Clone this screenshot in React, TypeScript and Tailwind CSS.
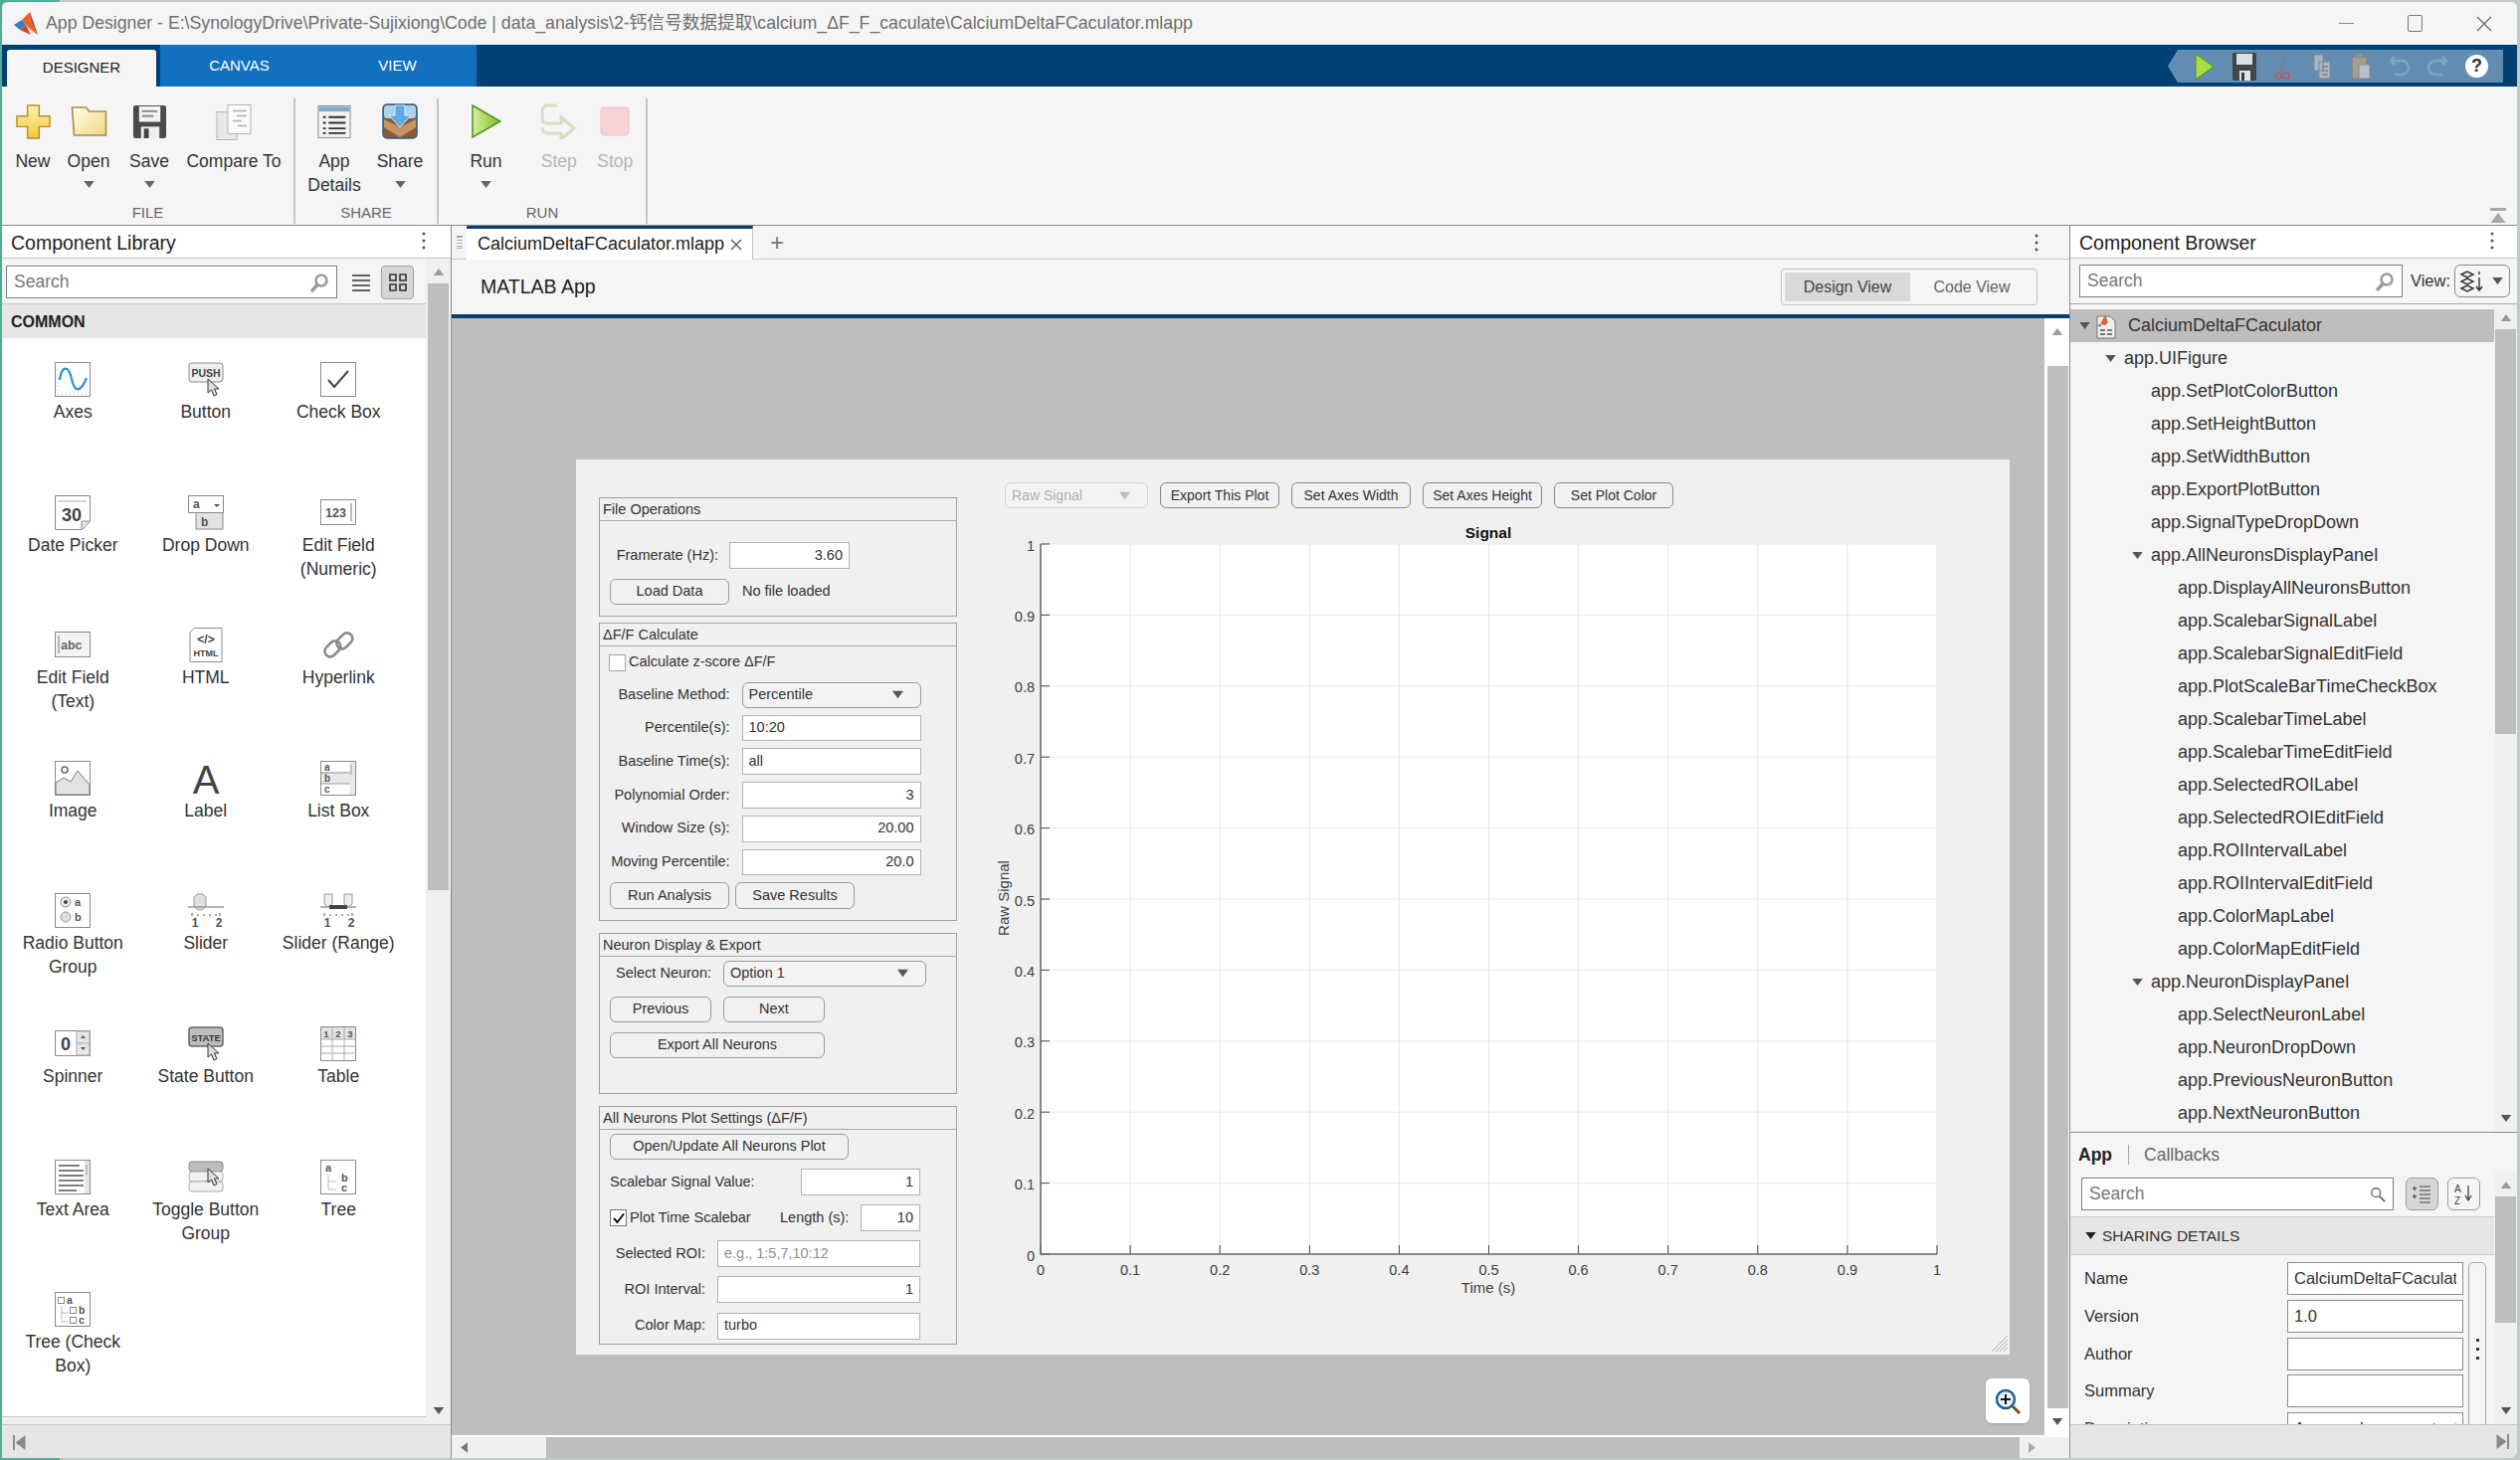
import React from 'react';

const Tri = ({ dir = 'down', className = '' }: { dir?: 'down' | 'up' | 'left' | 'right'; className?: string }) => {
  const pts = { down: '0,0 12,0 6,8', up: '0,8 12,8 6,0', left: '8,0 8,12 0,6', right: '0,0 0,12 8,6' }[dir];
  const box = dir === 'down' || dir === 'up' ? '0 0 12 8' : '0 0 8 12';
  return (
    <svg viewBox={box} className={className}>
      <polygon points={pts} fill="currentColor" />
    </svg>
  );
};

const MoreDots = ({ className = '' }: { className?: string }) => (
  <svg viewBox="0 0 4 18" className={`w-[4px] h-[18px] ${className}`}>
    <circle cx="2" cy="2" r="1.5" fill="#555" />
    <circle cx="2" cy="9" r="1.5" fill="#555" />
    <circle cx="2" cy="16" r="1.5" fill="#555" />
  </svg>
);

const Magnifier = ({ className = '' }: { className?: string }) => (
  <svg viewBox="0 0 20 20" className={className}>
    <circle cx="12" cy="8" r="5.5" fill="none" stroke="#9a9a9a" strokeWidth="2.6" />
    <line x1="8" y1="12.5" x2="3" y2="18" stroke="#9a9a9a" strokeWidth="3.4" strokeLinecap="round" />
  </svg>
);

// ---- ribbon icons ----
const ribbonIcons: Record<string, React.ReactNode> = {
  New: (
    <svg viewBox="0 0 36 36" className="w-[35px] h-[35px]">
      <defs>
        <linearGradient id="gold" x1="0" y1="0" x2="0" y2="1">
          <stop offset="0" stopColor="#fff3b0" />
          <stop offset="1" stopColor="#f3c53c" />
        </linearGradient>
      </defs>
      <polygon points="12,1 24,1 24,12 35,12 35,23 24,23 24,35 12,35 12,23 1,23 1,12 12,12" fill="url(#gold)" stroke="#b8901f" strokeWidth="1.5" />
    </svg>
  ),
  Open: (
    <svg viewBox="0 0 36 36" className="w-[37px] h-[36px]">
      <defs>
        <linearGradient id="fold" x1="0" y1="0" x2="1" y2="1">
          <stop offset="0" stopColor="#fffde8" />
          <stop offset="1" stopColor="#f0d77e" />
        </linearGradient>
      </defs>
      <path d="M1 4h14l3 4h17v24H3z" fill="url(#fold)" stroke="#a58d50" strokeWidth="1.6" />
    </svg>
  ),
  Save: (
    <svg viewBox="0 0 36 36" className="w-[35px] h-[35px]">
      <rect x="1" y="1" width="34" height="34" rx="2" fill="#4b4b4b" />
      <rect x="7" y="2" width="22" height="16" fill="#f4f4f4" />
      <rect x="10" y="6" width="16" height="2" fill="#888" />
      <rect x="10" y="11" width="12" height="2" fill="#888" />
      <rect x="9" y="23" width="19" height="12" fill="#eee" />
      <rect x="12" y="25" width="5" height="10" fill="#444" />
    </svg>
  ),
  'Compare To': (
    <svg viewBox="0 0 36 36" className="w-[36px] h-[37px]">
      <rect x="1" y="8" width="20" height="28" fill="#e8e8e8" stroke="#b5b5b5" />
      <rect x="12" y="1" width="23" height="29" fill="#fafafa" stroke="#b5b5b5" />
      <path d="M17 7h14M21 12h10M17 17h9M22 22h9" stroke="#b0b0b0" strokeWidth="1.5" />
    </svg>
  ),
  'App Details': (
    <svg viewBox="0 0 36 36" className="w-[34px] h-[35px]">
      <rect x="1" y="1" width="34" height="34" fill="#f1f1f1" stroke="#8a8a8a" />
      <rect x="2" y="2" width="32" height="5" fill="#7fa8cf" />
      <path d="M12 13h18M12 19h18M12 25h18M12 30h18M6 13h3M6 19h3M6 25h3M6 30h3" stroke="#303030" strokeWidth="2" />
    </svg>
  ),
  Share: (
    <svg viewBox="0 0 36 36" className="w-[36px] h-[36px]">
      <rect x="1" y="1" width="34" height="34" rx="4" fill="#8a5a34" stroke="#2e5f8e" strokeWidth="1.5" />
      <rect x="2" y="2" width="32" height="13" rx="3" fill="#a9d2ef" />
      <path d="M2 16l16 8 16-8v8l-16 10-16-10z" fill="#c69667" />
      <path d="M13 2h10v10h6L18 24 7 12h6z" fill="#5ea9e0" stroke="#dff0fb" />
    </svg>
  ),
  Run: (
    <svg viewBox="0 0 30 34" className="w-[30px] h-[34px]">
      <defs>
        <linearGradient id="grn" x1="0" y1="0" x2="1" y2="0">
          <stop offset="0" stopColor="#d7ee9d" />
          <stop offset="1" stopColor="#7dbf2a" />
        </linearGradient>
      </defs>
      <polygon points="1,1 29,17 1,33" fill="url(#grn)" stroke="#4f9220" strokeWidth="1.5" />
    </svg>
  ),
  Step: (
    <svg viewBox="0 0 36 36" className="w-[36px] h-[36px] opacity-50">
      <path d="M16 2H6a5 5 0 0 0-5 5v8a5 5 0 0 0 5 5h14v-6l13 11-13 11v-6H7C1 30 1 24 1 24" fill="none" stroke="#a9cf8c" strokeWidth="3" />
    </svg>
  ),
  Stop: (
    <svg viewBox="0 0 30 30" className="w-[30px] h-[30px]">
      <rect x="1" y="1" width="28" height="28" rx="3" fill="#f6d3d6" stroke="#eec2c6" />
    </svg>
  ),
};

const RibbonItem = ({ label, className, caret, muted }: { label: string; className: string; caret?: boolean; muted?: boolean }) => (
  <div className={`flex flex-col items-center ${className}`}>
    <div className="h-[40px] flex items-center justify-center">{ribbonIcons[label]}</div>
    <div className={`mt-[8px] text-[17.5px] leading-[24px] text-center ${muted ? 'text-[#b4b4b4]' : 'text-[#333]'}`}>
      {label === 'App Details' ? (
        <>
          App
          <br />
          Details
        </>
      ) : (
        label
      )}
    </div>
    {caret && <Tri className="w-[11px] h-[7px] mt-[8px] text-[#666]" />}
  </div>
);

// ---- library icons ----
const frame = 'fill-white stroke-[#8a8a8a]';
const libIcons: Record<string, React.ReactNode> = {
  Axes: (
    <>
      <rect x="0.5" y="0.5" width="35" height="34" className={frame} />
      <path d="M5 18C7 3 14 3 17 17S26 31 32 16" fill="none" stroke="#2f8fd6" strokeWidth="2.2" />
      <path d="M3 4v28h30" fill="none" stroke="#bbb" strokeDasharray="1 3" />
    </>
  ),
  Button: (
    <>
      <rect x="1" y="1" width="34" height="19" rx="3" fill="#efefef" stroke="#8a8a8a" />
      <text x="18" y="15" fontSize="10.5" fontWeight="700" textAnchor="middle" fill="#444">PUSH</text>
      <path d="M20 17v14l3.500-3 2.500 6 3-1.500-2.500-5.500h4.500z" fill="#ddd" stroke="#333" />
    </>
  ),
  'Check Box': (
    <>
      <rect x="0.5" y="0.5" width="35" height="34" className={frame} />
      <path d="M8 18l6 7L28 9" fill="none" stroke="#444" strokeWidth="2" />
    </>
  ),
  'Date Picker': (
    <>
      <path d="M.5.5h35v26l-8 8H.5z" className={frame} />
      <path d="M4 6h28" stroke="#aaa" />
      <text x="17" y="26" fontSize="18" fontWeight="700" textAnchor="middle" fill="#444">30</text>
      <path d="M27 34v-8h8" fill="#e6e6e6" stroke="#8a8a8a" />
    </>
  ),
  'Drop Down': (
    <>
      <rect x="8" y="17" width="27" height="17" fill="#e2e2e2" stroke="#8a8a8a" />
      <rect x="0.5" y="0.5" width="35" height="17" className={frame} />
      <text x="5" y="13" fontSize="12" fontWeight="700" fill="#555">a</text>
      <polygon points="26,9 32,9 29,12" fill="#555" />
      <text x="13" y="31" fontSize="12" fontWeight="700" fill="#555">b</text>
    </>
  ),
  'Edit Field (Numeric)': (
    <>
      <rect x="0.5" y="4.500" width="35" height="25" className={frame} />
      <text x="5" y="22" fontSize="12.5" fontWeight="700" fill="#555">123</text>
      <path d="M31 8v18" stroke="#777" />
    </>
  ),
  'Edit Field (Text)': (
    <>
      <rect x="0.5" y="4.500" width="35" height="25" fill="#f4f4f4" stroke="#8a8a8a" />
      <path d="M4 8v18" stroke="#777" />
      <text x="6" y="22" fontSize="12.5" fontWeight="700" fill="#666">abc</text>
    </>
  ),
  HTML: (
    <>
      <path d="M6 .5h28v34H2V5z" className={frame} />
      <text x="18" y="16" fontSize="12" fontWeight="700" textAnchor="middle" fill="#444">&lt;/&gt;</text>
      <text x="18" y="29" fontSize="9" fontWeight="700" textAnchor="middle" fill="#444">HTML</text>
    </>
  ),
  Hyperlink: (
    <g fill="none" stroke="#8c8c8c" strokeWidth="2.6">
      <rect x="3" y="16" width="18" height="11" rx="5.500" transform="rotate(-45 12 21)" />
      <rect x="15" y="8" width="18" height="11" rx="5.500" transform="rotate(-45 24 13)" />
    </g>
  ),
  Image: (
    <>
      <rect x="0.5" y="0.5" width="35" height="34" className={frame} />
      <path d="M1 34V22l8-5 7 4 7-11 12 14v10z" fill="#e3e3e3" stroke="#777" />
      <circle cx="10" cy="9" r="3" fill="none" stroke="#666" strokeWidth="1.500" />
    </>
  ),
  Label: <text x="18" y="33" fontSize="40" textAnchor="middle" fill="#444">A</text>,
  'List Box': (
    <>
      <rect x="0.5" y="0.5" width="35" height="34" fill="#e8e8e8" stroke="#8a8a8a" />
      <rect x="1" y="1" width="29" height="10" fill="#fff" />
      <rect x="1" y="23" width="29" height="11" fill="#fff" />
      <path d="M1 12h29M1 23h29M31 4v10" stroke="#999" />
      <text x="4" y="10" fontSize="10" fontWeight="700" fill="#555">a</text>
      <text x="4" y="21" fontSize="10" fontWeight="700" fill="#555">b</text>
      <text x="4" y="32" fontSize="10" fontWeight="700" fill="#555">c</text>
    </>
  ),
  'Radio Button Group': (
    <>
      <rect x="0.5" y="0.5" width="35" height="34" className={frame} />
      <circle cx="11" cy="9" r="5" fill="#eee" stroke="#888" />
      <circle cx="11" cy="9" r="2" fill="#444" />
      <circle cx="11" cy="24" r="5" fill="#ddd" stroke="#999" />
      <text x="20" y="13" fontSize="11" fontWeight="700" fill="#555">a</text>
      <text x="20" y="28" fontSize="11" fontWeight="700" fill="#555">b</text>
    </>
  ),
  Slider: (
    <>
      <path d="M9 1h6l3 3v9l-4 4h-4l-4-4V4z" fill="#e0e0e0" stroke="#999" />
      <path d="M0 14h36" stroke="#999" strokeWidth="1.500" />
      <path d="M4 20v3M10 21v2M16 21v2M22 21v2M28 21v2M32 20v3" stroke="#555" />
      <text x="7" y="34" fontSize="12" fontWeight="700" textAnchor="middle" fill="#555">1</text>
      <text x="31" y="34" fontSize="12" fontWeight="700" textAnchor="middle" fill="#555">2</text>
    </>
  ),
  'Slider (Range)': (
    <>
      <path d="M4 1h8v10l-4 3-4-3zM24 1h8v10l-4 3-4-3z" fill="#eee" stroke="#999" />
      <path d="M0 14h36" stroke="#999" strokeWidth="1.500" />
      <rect x="9" y="12" width="18" height="4" fill="#444" />
      <path d="M4 20v3M10 21v2M16 21v2M22 21v2M28 21v2M32 20v3" stroke="#555" />
      <text x="7" y="34" fontSize="12" fontWeight="700" textAnchor="middle" fill="#555">1</text>
      <text x="31" y="34" fontSize="12" fontWeight="700" textAnchor="middle" fill="#555">2</text>
    </>
  ),
  Spinner: (
    <>
      <rect x="0.5" y="4.500" width="35" height="25" className={frame} />
      <rect x="22" y="5" width="13" height="24" fill="#e6e6e6" stroke="#aaa" />
      <path d="M22 17h13" stroke="#aaa" />
      <polygon points="26,12 31,12 28.500,9" fill="#555" />
      <polygon points="26,21 31,21 28.500,24" fill="#555" />
      <text x="11" y="24" fontSize="18" fontWeight="700" textAnchor="middle" fill="#444">0</text>
    </>
  ),
  'State Button': (
    <>
      <rect x="1" y="1" width="34" height="19" rx="3" fill="#bdbdbd" stroke="#666" strokeWidth="1.500" />
      <text x="18" y="15" fontSize="9.500" fontWeight="700" textAnchor="middle" fill="#333">STATE</text>
      <path d="M20 17v14l3.500-3 2.500 6 3-1.500-2.500-5.500h4.500z" fill="#ddd" stroke="#333" />
    </>
  ),
  Table: (
    <>
      <rect x="0.5" y="0.5" width="35" height="34" className={frame} />
      <rect x="1" y="1" width="34" height="12" fill="#e2e2e2" />
      <path d="M12 1v34M24 1v34M1 13h34M1 20h34M1 27h34" stroke="#aaa" />
      <text x="6" y="11" fontSize="9.500" fontWeight="700" textAnchor="middle" fill="#555">1</text>
      <text x="18" y="11" fontSize="9.500" fontWeight="700" textAnchor="middle" fill="#555">2</text>
      <text x="30" y="11" fontSize="9.500" fontWeight="700" textAnchor="middle" fill="#555">3</text>
    </>
  ),
  'Text Area': (
    <>
      <rect x="0.5" y="0.5" width="35" height="34" className={frame} />
      <rect x="30" y="1" width="5" height="33" fill="#e6e6e6" />
      <path d="M32 5v10" stroke="#999" />
      <path d="M4 6h21M4 11h25M4 16h25M4 21h25M4 26h25M4 31h18" stroke="#555" strokeWidth="1.400" />
    </>
  ),
  'Toggle Button Group': (
    <>
      <rect x="1" y="2" width="34" height="10" rx="3" fill="#bdbdbd" stroke="#888" />
      <rect x="1" y="12" width="34" height="10" rx="3" fill="#f2f2f2" stroke="#aaa" />
      <rect x="1" y="22" width="34" height="10" rx="3" fill="#f2f2f2" stroke="#aaa" />
      <path d="M20 9v14l3.500-3 2.500 6 3-1.500-2.500-5.500h4.500z" fill="#ddd" stroke="#333" />
    </>
  ),
  Tree: (
    <>
      <rect x="0.5" y="0.5" width="35" height="34" className={frame} />
      <text x="5" y="12" fontSize="11" fontWeight="700" fill="#555">a</text>
      <path d="M8 15v15h8M8 22h8" fill="none" stroke="#bbb" />
      <text x="21" y="22" fontSize="11" fontWeight="700" fill="#555">b</text>
      <text x="21" y="32" fontSize="11" fontWeight="700" fill="#555">c</text>
    </>
  ),
  'Tree (Check Box)': (
    <>
      <rect x="0.5" y="0.5" width="35" height="34" className={frame} />
      <rect x="3.500" y="5.500" width="6" height="6" fill="none" stroke="#888" />
      <text x="12" y="12" fontSize="10.500" fontWeight="700" fill="#555">a</text>
      <path d="M7 14v16h7M7 21h7" fill="none" stroke="#bbb" />
      <rect x="15.500" y="15.500" width="6" height="6" fill="none" stroke="#888" />
      <text x="24" y="22" fontSize="10.500" fontWeight="700" fill="#555">b</text>
      <rect x="15.500" y="25.500" width="6" height="6" fill="none" stroke="#888" />
      <text x="24" y="32" fontSize="10.500" fontWeight="700" fill="#555">c</text>
    </>
  ),
};

const libraryItems = [
  'Axes', 'Button', 'Check Box',
  'Date Picker', 'Drop Down', 'Edit Field (Numeric)',
  'Edit Field (Text)', 'HTML', 'Hyperlink',
  'Image', 'Label', 'List Box',
  'Radio Button Group', 'Slider', 'Slider (Range)',
  'Spinner', 'State Button', 'Table',
  'Text Area', 'Toggle Button Group', 'Tree',
  'Tree (Check Box)',
];

const LibraryItem = ({ name }: { name: string }) => (
  <div className="flex flex-col items-center h-[133.6px]">
    <svg viewBox="0 0 36 36" className="w-[36px] h-[36px] shrink-0 overflow-visible">
      {libIcons[name]}
    </svg>
    <div className="mt-[2px] w-[118px] text-center text-[17.5px] leading-[24px] text-[#333]">{name}</div>
  </div>
);

// ---- canvas widgets ----
const Btn = ({ className = '', children }: { className?: string; children: React.ReactNode }) => (
  <div className={`flex items-center justify-center rounded-[6px] border border-[#9c9c9c] bg-[#f1f1f1] text-[#333] ${className}`}>
    {children}
  </div>
);

const Inp = ({ className = '', right, muted, children }: { className?: string; right?: boolean; muted?: boolean; children?: React.ReactNode }) => (
  <div
    className={`flex items-center bg-white border-[1.5px] border-[#b3b3b3] px-[6px] ${right ? 'justify-end' : ''} ${
      muted ? 'text-[#8f8f8f]' : 'text-[#333]'
    } ${className}`}
  >
    {children}
  </div>
);

const Drop = ({ className = '', children, muted }: { className?: string; children: React.ReactNode; muted?: boolean }) => (
  <div
    className={`flex items-center justify-between rounded-[6px] border px-[6px] bg-[#f3f3f3] ${
      muted ? 'border-[#d4d4d4] text-[#b0b0b0]' : 'border-[#999] text-[#333]'
    } ${className}`}
  >
    <span>{children}</span>
    <Tri className={`w-[11px] h-[9px] mr-[11px] ${muted ? 'text-[#bcbcbc]' : 'text-[#555]'}`} />
  </div>
);

const Panel = ({ title, className = '', children }: { title: string; className?: string; children: React.ReactNode }) => (
  <div className={`w-[360px] border-[1.5px] border-[#a0a0a0] bg-[#f0f0f0] ${className}`}>
    <div className="h-[23px] leading-[23px] px-[3px] text-[14.5px] text-[#333] border-b-[1.5px] border-[#a8a8a8]">{title}</div>
    {children}
  </div>
);

const Check = ({ checked }: { checked?: boolean }) => (
  <div className={`w-[17px] h-[17px] bg-white border-[1.5px] ${checked ? 'border-[#777]' : 'border-[#a8a8a8]'} flex items-center justify-center shrink-0`}>
    {checked && (
      <svg viewBox="0 0 14 14" className="w-[14px] h-[14px]">
        <path d="M2 7l3.500 4L12 2.500" fill="none" stroke="#111" strokeWidth="2" />
      </svg>
    )}
  </div>
);

const deltaRows = [
  { label: 'Percentile(s):', value: '10:20' },
  { label: 'Baseline Time(s):', value: 'all' },
  { label: 'Polynomial Order:', value: '3', right: true },
  { label: 'Window Size (s):', value: '20.00', right: true },
  { label: 'Moving Percentile:', value: '20.0', right: true },
];

const ControlColumn = () => (
  <div className="w-[360px] ml-[23px] mt-[38px] text-[14.5px] shrink-0">
    <Panel title="File Operations" className="h-[120px]">
      <div className="flex items-center mt-[21px] h-[27px]">
        <div className="w-[119px] text-right text-[#333]">Framerate (Hz):</div>
        <Inp right className="ml-[11px] w-[121px] h-[27px]">3.60</Inp>
      </div>
      <div className="flex items-center mt-[10px]">
        <Btn className="ml-[10px] w-[120px] h-[26px]">Load Data</Btn>
        <span className="ml-[13px] text-[#333]">No file loaded</span>
      </div>
    </Panel>

    <Panel title="ΔF/F Calculate" className="h-[300px] mt-[6px]">
      <div className="flex items-center gap-[3px] ml-[9px] mt-[7px] h-[18px] text-[#333]">
        <Check />
        <span>Calculate z-score ΔF/F</span>
      </div>
      <div className="flex items-center mt-[10.5px] h-[26px]">
        <div className="w-[130.500px] text-right text-[#333]">Baseline Method:</div>
        <Drop className="ml-[12px] w-[180px] h-[26px]">Percentile</Drop>
      </div>
      {deltaRows.map((r) => (
        <div key={r.label} className="flex items-center mt-[7.200px] h-[26.600px]">
          <div className="w-[130.500px] text-right text-[#333]">{r.label}</div>
          <Inp right={r.right} className="ml-[12px] w-[180px] h-[26.600px]">{r.value}</Inp>
        </div>
      ))}
      <div className="flex gap-[6px] ml-[10px] mt-[7px]">
        <Btn className="w-[120px] h-[27px]">Run Analysis</Btn>
        <Btn className="w-[120px] h-[27px]">Save Results</Btn>
      </div>
    </Panel>

    <Panel title="Neuron Display & Export" className="h-[162px] mt-[12px]">
      <div className="flex items-center mt-[3.500px] h-[26px]">
        <div className="w-[112px] text-right text-[#333]">Select Neuron:</div>
        <Drop className="ml-[12px] w-[204px] h-[26px]">Option 1</Drop>
      </div>
      <div className="flex gap-[12px] ml-[10px] mt-[10.5px]">
        <Btn className="w-[102px] h-[26px]">Previous</Btn>
        <Btn className="w-[102px] h-[26px]">Next</Btn>
      </div>
      <Btn className="ml-[10px] mt-[10px] w-[216px] h-[26px]">Export All Neurons</Btn>
    </Panel>

    <Panel title="All Neurons Plot Settings (ΔF/F)" className="h-[240px] mt-[12px]">
      <Btn className="ml-[10px] mt-[4px] w-[240px] h-[26px]">Open/Update All Neurons Plot</Btn>
      <div className="flex items-center mt-[9px] h-[27px] ml-[10px]">
        <div className="w-[192px] text-[#333]">Scalebar Signal Value:</div>
        <Inp right className="w-[120px] h-[27px]">1</Inp>
      </div>
      <div className="flex items-center mt-[9px] h-[27px] ml-[10px] text-[#333]">
        <Check checked />
        <span className="ml-[3px] w-[151px]">Plot Time Scalebar</span>
        <span className="w-[81px]">Length (s):</span>
        <Inp right className="w-[60px] h-[27px]">10</Inp>
      </div>
      {[
        { label: 'Selected ROI:', value: 'e.g., 1:5,7,10:12', muted: true },
        { label: 'ROI Interval:', value: '1', right: true },
        { label: 'Color Map:', value: 'turbo' },
      ].map((r) => (
        <div key={r.label} className="flex items-center mt-[9.200px] h-[27px]">
          <div className="w-[106px] text-right text-[#333]">{r.label}</div>
          <Inp right={r.right} muted={r.muted} className="ml-[12px] w-[204px] h-[27px]">{r.value}</Inp>
        </div>
      ))}
    </Panel>
  </div>
);

const xTicks = [0, 0.1, 0.2, 0.3, 0.4, 0.5, 0.6, 0.7, 0.8, 0.9, 1];
const PLOT_L = 46;
const PLOT_R = 947;
const PLOT_T = 27;
const PLOT_B = 741;

const Plot = () => (
  <svg viewBox="0 0 980 800" className="w-[980px] h-[800px] ml-[-10px] mt-[9px]" fontFamily="'Liberation Sans', sans-serif">
    <rect x={PLOT_L} y={PLOT_T} width={PLOT_R - PLOT_L} height={PLOT_B - PLOT_T} fill="#fff" />
    {xTicks.map((t) => {
      const x = PLOT_L + t * (PLOT_R - PLOT_L);
      const y = PLOT_B - t * (PLOT_B - PLOT_T);
      return (
        <g key={t}>
          <line x1={x} x2={x} y1={PLOT_T} y2={PLOT_B} stroke="#e6e6e6" />
          <line x1={PLOT_L} x2={PLOT_R} y1={y} y2={y} stroke="#ececec" />
          <line x1={x} x2={x} y1={PLOT_B - 9} y2={PLOT_B} stroke="#444" />
          <line x1={PLOT_L} x2={PLOT_L + 9} y1={y} y2={y} stroke="#444" />
          <text x={x} y={PLOT_B + 21} fontSize="14.500" textAnchor="middle" fill="#404040">{t}</text>
          <text x={PLOT_L - 6} y={y + 6.5} fontSize="14.500" textAnchor="end" fill="#404040">{t}</text>
        </g>
      );
    })}
    <path d={`M${PLOT_L} ${PLOT_T}V${PLOT_B}H${PLOT_R}`} fill="none" stroke="#666" strokeWidth="1.500" />
    <text x="496" y="21" fontSize="15.500" fontWeight="700" textAnchor="middle" fill="#111">Signal</text>
    <text x="496" y="780" fontSize="15" textAnchor="middle" fill="#404040">Time (s)</text>
    <text x="0" y="0" fontSize="15" textAnchor="middle" fill="#404040" transform="translate(14 383) rotate(-90)">Raw Signal</text>
  </svg>
);

// ---- component browser ----
const treeRows: { text: string; level: number; arrow?: boolean }[] = [
  { text: 'app.UIFigure', level: 1, arrow: true },
  ...['SetPlotColorButton', 'SetHeightButton', 'SetWidthButton', 'ExportPlotButton', 'SignalTypeDropDown'].map((n) => ({ text: `app.${n}`, level: 2 })),
  { text: 'app.AllNeuronsDisplayPanel', level: 2, arrow: true },
  ...[
    'DisplayAllNeuronsButton', 'ScalebarSignalLabel', 'ScalebarSignalEditField', 'PlotScaleBarTimeCheckBox', 'ScalebarTimeLabel',
    'ScalebarTimeEditField', 'SelectedROILabel', 'SelectedROIEditField', 'ROIIntervalLabel', 'ROIIntervalEditField', 'ColorMapLabel', 'ColorMapEditField',
  ].map((n) => ({ text: `app.${n}`, level: 3 })),
  { text: 'app.NeuronDisplayPanel', level: 2, arrow: true },
  ...['SelectNeuronLabel', 'NeuronDropDown', 'PreviousNeuronButton', 'NextNeuronButton'].map((n) => ({ text: `app.${n}`, level: 3 })),
];

const levelIndent: Record<number, string> = { 1: 'pl-[54px]', 2: 'pl-[81px]', 3: 'pl-[108px]' };
const arrowIndent: Record<number, string> = { 1: 'pl-[35px]', 2: 'pl-[62px]' };

const TreeRow = ({ text, level, arrow }: { text: string; level: number; arrow?: boolean }) => (
  <div className={`h-[33px] flex items-center text-[18px] text-[#333] ${arrow ? arrowIndent[level] : levelIndent[level]}`}>
    {arrow && <Tri className="w-[11px] h-[7px] mr-[8px] text-[#555]" />}
    {text}
  </div>
);

const detailRows = ['Name', 'Version', 'Author', 'Summary', 'Description'];
const detailValues: Record<string, string> = { Name: 'CalciumDeltaFCaculator', Version: '1.0', Description: 'A general purpose tool for it' };

const ScrollTrack = ({ trackClass, thumbClass }: { trackClass: string; thumbClass: string }) => (
  <div className={`flex flex-col items-center bg-[#f0f0f0] shrink-0 ${trackClass}`}>
    <Tri dir="up" className="w-[12px] h-[7px] mt-[10px] text-[#9a9a9a]" />
    <div className={`w-[21px] bg-[#bebebe] ${thumbClass}`} />
    <div className="flex-1" />
    <Tri className="w-[12px] h-[7px] mb-[10px] text-[#555]" />
  </div>
);

export default function App() {
  return (
    <div className="w-[2533px] h-[1468px] overflow-hidden pl-[2px] pt-[2px] pr-[3px] pb-[2px] bg-[linear-gradient(90deg,#4fae98_0,#4fae98_60px,#c4c9c8_60px)] font-['Liberation_Sans','Noto_Sans_CJK_SC',sans-serif]">
      <div className="w-full h-full rounded-t-[6px] rounded-br-[8px] overflow-hidden flex flex-col bg-[#f5f5f5]">
        {/* Title bar */}
        <div className="h-[43px] shrink-0 flex items-center bg-[#f5f5f5]">
          <svg viewBox="0 0 26 26" className="w-[26px] h-[26px] ml-[11px]">
            <polygon points="1,14 9,9 13,14 7,19" fill="#2f7fc1" />
            <polygon points="9,9 17,1 25,24 18,19 13,14" fill="#e8662c" />
            <polygon points="17,1 20,10 25,24 19,12" fill="#c63a1e" />
            <polygon points="7,19 13,14 18,24" fill="#c9471f" />
          </svg>
          <span className="ml-[7px] text-[17.7px] text-[#6f6f6f] whitespace-nowrap">
            App Designer - E:\SynologyDrive\Private-Sujixiong\Code | data_analysis\2-钙信号数据提取\calcium_ΔF_F_caculate\CalciumDeltaFCaculator.mlapp
          </span>
          <div className="ml-auto flex items-center mr-[25px] gap-[54px] text-[#777]">
            <div className="w-[15px] h-[1.500px] bg-[#888]" />
            <div className="w-[15px] h-[17px] rounded-[2px] border-[1.5px] border-[#777]" />
            <svg viewBox="0 0 16 16" className="w-[16px] h-[16px]">
              <path d="M1 1l14 14M15 1L1 15" stroke="#666" strokeWidth="1.200" />
            </svg>
          </div>
        </div>

        {/* Toolstrip tabs */}
        <div className="h-[42px] shrink-0 flex bg-[#004073] text-[15px]">
          <div className="ml-[5px] mt-[5px] w-[150px] h-[37px] rounded-t-[3px] bg-[#f5f5f5] text-[#222] flex items-center justify-center">DESIGNER</div>
          <div className="ml-[4px] w-[159px] bg-[#1170bf] text-white flex items-center justify-center">CANVAS</div>
          <div className="w-[159px] bg-[#1170bf] text-white flex items-center justify-center">VIEW</div>
          <div className="ml-auto mt-[5px] mr-[14px] w-[337px] h-[33px] bg-[#628db0] [clip-path:polygon(10px_0,100%_0,100%_100%,10px_100%,0_50%)] flex items-center pl-[27px]">
            <svg viewBox="0 0 20 28" className="w-[20px] h-[28px]">
              <polygon points="1,1 19,14 1,27" fill="#a6de44" stroke="#4a8f1f" />
            </svg>
            <svg viewBox="0 0 24 28" className="w-[24px] h-[28px] ml-[18px] opacity-90">
              <rect x="0" y="0" width="24" height="28" rx="2" fill="#3d3d3d" />
              <rect x="4" y="1" width="16" height="11" fill="#e8e8e8" />
              <rect x="7" y="18" width="11" height="10" fill="#eee" />
              <rect x="9" y="20" width="3" height="8" fill="#333" />
            </svg>
            <svg viewBox="0 0 16 28" className="w-[16px] h-[28px] ml-[18px]">
              <path d="M12 1L6 18" stroke="#7a7f86" strokeWidth="1.500" />
              <circle cx="4" cy="23" r="3" fill="none" stroke="#b25a6c" strokeWidth="1.600" />
              <circle cx="12" cy="23" r="3" fill="none" stroke="#b25a6c" strokeWidth="1.600" />
            </svg>
            <svg viewBox="0 0 18 26" className="w-[18px] h-[26px] ml-[23px]">
              <path d="M1 1h9v16H1zM6 8h11v17H6z" fill="#a9b5bf" stroke="#7e8b96" />
              <path d="M9 13h6M9 17h6M9 21h6" stroke="#67747f" />
            </svg>
            <svg viewBox="0 0 20 26" className="w-[20px] h-[26px] ml-[20px]">
              <rect x="1" y="3" width="15" height="22" fill="#a59f93" stroke="#7e7f7d" />
              <rect x="6" y="0" width="6" height="5" fill="#94928c" />
              <rect x="8" y="11" width="11" height="14" fill="#b6c0c8" stroke="#7e8b96" />
            </svg>
            <svg viewBox="0 0 22 22" className="w-[22px] h-[22px] ml-[18px]">
              <path d="M6 1L2 5l4 4M2 5h11a6.500 6.500 0 0 1 0 14H6" fill="none" stroke="#7fa5c3" strokeWidth="2.600" />
            </svg>
            <svg viewBox="0 0 22 22" className="w-[22px] h-[22px] ml-[16px]">
              <path d="M16 1l4 4-4 4M20 5H9a6.500 6.500 0 0 0 0 14h7" fill="none" stroke="#7fa5c3" strokeWidth="2.600" />
            </svg>
            <div className="ml-[17px] w-[23px] h-[23px] rounded-full bg-white flex items-center justify-center text-[18px] font-bold text-[#333]">?</div>
          </div>
        </div>

        {/* Ribbon */}
        <div className="h-[139px] shrink-0 flex pt-[12px] bg-[#f5f5f5]">
          <div className="h-[126px] w-[295px] flex flex-col border-r-2 border-[#c4c4c4]">
            <div className="flex flex-1 pt-[3px] pl-[4px]">
              <RibbonItem label="New" className="w-[54px]" />
              <RibbonItem label="Open" className="w-[58px]" caret />
              <RibbonItem label="Save" className="w-[64px]" caret />
              <RibbonItem label="Compare To" className="w-[106px]" />
            </div>
            <div className="text-center text-[15px] leading-[22px] text-[#666]">FILE</div>
          </div>
          <div className="h-[126px] w-[144px] flex flex-col border-r-2 border-[#c4c4c4]">
            <div className="flex flex-1 pt-[3px]">
              <RibbonItem label="App Details" className="w-[78px]" />
              <RibbonItem label="Share" className="w-[54px]" caret />
            </div>
            <div className="text-center text-[15px] leading-[22px] text-[#666]">SHARE</div>
          </div>
          <div className="h-[126px] w-[210px] flex flex-col border-r-2 border-[#c4c4c4]">
            <div className="flex flex-1 pt-[3px]">
              <RibbonItem label="Run" className="w-[96px]" caret />
              <RibbonItem label="Step" className="w-[50px] pl-[2px]" muted />
              <RibbonItem label="Stop" className="w-[64px] pl-[2px]" muted />
            </div>
            <div className="text-center text-[15px] leading-[22px] text-[#666]">RUN</div>
          </div>
          <div className="ml-auto self-end mr-[11px] mb-[2px] flex flex-col items-center">
            <div className="w-[16px] h-[3px] bg-[#a8a8a8]" />
            <Tri dir="up" className="w-[16px] h-[10px] mt-[2px] text-[#a8a8a8]" />
          </div>
        </div>

        {/* Workspace */}
        <div className="flex-1 min-h-0 flex border-t border-[#8c8c8c]">
          {/* Component Library */}
          <div className="w-[452px] shrink-0 flex flex-col bg-white border-r border-[#8c8c8c]">
            <div className="h-[33px] shrink-0 flex items-center justify-between pl-[9px] pr-[9px] pt-[4px] border-b border-[#c4c4c4] text-[19.5px] text-[#222]">
              Component Library
              <MoreDots className="mr-[16px] mb-[6px]" />
            </div>
            <div className="flex-1 min-h-0 flex">
              <div className="w-[426px] shrink-0 flex flex-col">
                <div className="h-[46px] shrink-0 flex items-center pt-[2px] bg-[#f5f5f5] border-b border-[#c4c4c4]">
                  <div className="ml-[4px] w-[333px] h-[33px] bg-white border border-[#7f7f7f] flex items-center justify-between px-[7px] text-[17.5px] text-[#777]">
                    Search
                    <Magnifier className="w-[20px] h-[20px]" />
                  </div>
                  <svg viewBox="0 0 18 18" className="w-[18px] h-[18px] ml-[15px]">
                    <path d="M0 2h18M0 7h18M0 12h18M0 17h18" stroke="#333" strokeWidth="1.600" />
                  </svg>
                  <div className="ml-[11px] w-[33px] h-[34px] rounded-[4px] bg-[#d6d6d6] border border-[#a0a0a0] flex items-center justify-center">
                    <svg viewBox="0 0 18 18" className="w-[18px] h-[18px]">
                      <path d="M1 1h6v6H1zM11 1h6v6h-6zM1 11h6v6H1zM11 11h6v6h-6z" fill="none" stroke="#333" strokeWidth="1.600" />
                    </svg>
                  </div>
                </div>
                <div className="h-[34px] shrink-0 flex items-center pl-[9px] pt-[2px] bg-[#e6e6e6] text-[16px] font-bold text-[#222]">COMMON</div>
                <div className="flex-1 min-h-0 overflow-hidden pt-[24px] pl-[4.500px] grid grid-cols-[133.5px_133.5px_133.5px] content-start bg-white border-b border-[#c4c4c4]">
                  {libraryItems.map((n) => (
                    <LibraryItem key={n} name={n} />
                  ))}
                </div>
                <div className="h-[7px] shrink-0 bg-[#f0f0f0]" />
              </div>
              <ScrollTrack trackClass="w-[25px]" thumbClass="h-[610px] mt-[8px]" />
            </div>
            <div className="h-[34px] shrink-0 flex items-center pl-[11px] pt-[2px] bg-[#e6e6e6] border-t border-[#c4c4c4]">
              <div className="w-[2px] h-[15px] bg-[#8a8a8a]" />
              <Tri dir="left" className="w-[11px] h-[15px] text-[#8a8a8a]" />
            </div>
          </div>

          {/* Editor */}
          <div className="w-[1627px] shrink-0 flex flex-col border-r border-[#8c8c8c]">
            <div className="h-[34px] shrink-0 flex items-stretch bg-[#f5f5f5] border-b border-[#c4c4c4]">
              <div className="w-[15px] flex items-center justify-center">
                <div className="w-[6px] h-[13px] border-y border-[#aaa] bg-[repeating-linear-gradient(#aaa_0,#aaa_1px,transparent_1px,transparent_3px)]" />
              </div>
              <div className="w-[288px] -mb-[1px] bg-white border-t-[3px] border-[#004073] border-r border-r-[#c4c4c4] flex items-center pl-[11px] text-[18px] text-[#222]">
                CalciumDeltaFCaculator.mlapp
                <svg viewBox="0 0 12 12" className="w-[12px] h-[12px] ml-[6px]">
                  <path d="M1 1l10 10M11 1L1 11" stroke="#555" strokeWidth="1.300" />
                </svg>
              </div>
              <div className="ml-[17px] flex items-center text-[24px] text-[#777]">+</div>
              <div className="ml-auto flex items-center mr-[31px]">
                <MoreDots />
              </div>
            </div>
            <div className="h-[55px] shrink-0 flex items-center justify-between bg-[#f5f5f5]">
              <span className="ml-[29px] text-[19.5px] text-[#222]">MATLAB App</span>
              <div className="mr-[32px] w-[258px] h-[37px] rounded-[4px] border border-[#c4c4c4] flex items-center p-[3px] text-[16px]">
                <div className="w-[126px] h-[29px] bg-[#d9d9d9] flex items-center justify-center text-[#444]">Design View</div>
                <div className="flex-1 text-center text-[#666]">Code View</div>
              </div>
            </div>
            <div className="h-[4px] shrink-0 bg-[#004073]" />
            <div className="flex-1 min-h-0 flex">
              <div className="relative flex-1 bg-[#bebebe]">
                <div className="relative ml-[125px] mt-[142px] w-[1441px] h-[900px] flex bg-[#f0f0f0]">
                  <ControlColumn />
                  <div className="ml-[48px] mt-[23px] flex flex-col">
                    <div className="flex gap-[12px] text-[14px]">
                      <Drop muted className="w-[144px] h-[26px]">Raw Signal</Drop>
                      <Btn className="w-[120px] h-[26px] border-[#888]">Export This Plot</Btn>
                      <Btn className="w-[120px] h-[26px] border-[#888]">Set Axes Width</Btn>
                      <Btn className="w-[120px] h-[26px] border-[#888]">Set Axes Height</Btn>
                      <Btn className="w-[120px] h-[26px] border-[#888]">Set Plot Color</Btn>
                    </div>
                    <Plot />
                  </div>
                  <svg viewBox="0 0 18 18" className="absolute right-[1px] bottom-[2px] w-[18px] h-[18px]">
                    <path d="M17 1L1 17M17 5L5 17M17 9L9 17M17 13l-4 4" stroke="#b0b0b0" />
                  </svg>
                </div>
                <div className="absolute right-[15px] bottom-[12px] w-[44px] h-[45px] rounded-[6px] bg-white shadow flex items-center justify-center">
                  <svg viewBox="0 0 28 28" className="w-[28px] h-[28px]">
                    <circle cx="12" cy="12" r="9" fill="#eaf2f9" stroke="#1e5f94" strokeWidth="2.500" />
                    <path d="M7 12h10M12 7v10" stroke="#111" strokeWidth="2" />
                    <path d="M19 19l7 7" stroke="#7a4a22" strokeWidth="3" />
                  </svg>
                </div>
              </div>
              <div className="w-[25px] shrink-0 border-l border-white flex">
                <ScrollTrack trackClass="w-full bg-white" thumbClass="h-[1048px] mt-[31px]" />
              </div>
            </div>
            <div className="h-[23px] shrink-0 flex items-center border-t-2 border-white bg-[#f0f0f0]">
              <Tri dir="left" className="w-[7px] h-[11px] ml-[9px] text-[#777]" />
              <div className="ml-[79px] w-[1481px] h-full bg-[#bebebe]" />
              <Tri dir="right" className="w-[7px] h-[11px] ml-[9px] text-[#aaa]" />
            </div>
          </div>

          {/* Component Browser */}
          <div className="flex-1 min-w-0 flex flex-col bg-[#f5f5f5]">
            <div className="h-[33px] shrink-0 flex items-center justify-between px-[9px] pt-[4px] bg-white border-b border-[#c4c4c4] text-[19.5px] text-[#222]">
              Component Browser
              <MoreDots className="mr-[14px] mb-[6px]" />
            </div>
            <div className="h-[46px] shrink-0 flex items-center border-b border-[#a8a8a8]">
              <div className="ml-[9px] w-[325px] h-[33px] bg-white border border-[#7f7f7f] flex items-center justify-between px-[7px] text-[17.5px] text-[#777]">
                Search
                <Magnifier className="w-[20px] h-[20px]" />
              </div>
              <span className="ml-[8px] text-[16.500px] text-[#333]">View:</span>
              <div className="ml-[4px] w-[56px] h-[33px] rounded-[6px] border border-[#8c8c8c] flex items-center justify-between px-[4px]">
                <svg viewBox="0 0 24 24" className="w-[24px] h-[24px]">
                  <path d="M2 5l6-3 6 3-6 3zM2 12l6-3 6 3-6 3zM2 19l6-3 6 3-6 3zM20 2v3M20 8v12M17 17l3 4 3-4" fill="none" stroke="#333" strokeWidth="1.400" />
                </svg>
                <Tri className="w-[11px] h-[7px] mr-[2px] text-[#555]" />
              </div>
            </div>
            <div className="h-[833px] shrink-0 flex border-b border-[#8c8c8c]">
              <div className="w-[426px] shrink-0 pt-[5px]">
                <div className="h-[33px] flex items-center bg-[#bebebe] text-[18px] text-[#333]">
                  <Tri className="w-[11px] h-[7px] ml-[9px] text-[#555]" />
                  <svg viewBox="0 0 20 26" className="w-[20px] h-[26px] ml-[6px]">
                    <path d="M1 3h13l5 5v17H1z" fill="#eee" stroke="#777" />
                    <path d="M9 2L4 11l5 1 3-3z" fill="#d9662a" />
                    <path d="M4 11l-3 1 4 2z" fill="#2f7fc1" />
                    <path d="M4 17h5M11 17h5M4 21h5M11 21h5" stroke="#777" strokeWidth="2" />
                  </svg>
                  <span className="ml-[12px]">CalciumDeltaFCaculator</span>
                </div>
                {treeRows.map((r) => (
                  <TreeRow key={r.text} {...r} />
                ))}
              </div>
              <ScrollTrack trackClass="w-[23px]" thumbClass="h-[407px] mt-[8px]" />
            </div>

            {/* Inspector */}
            <div className="h-[39px] shrink-0 flex items-center pl-[8px] pt-[5px] text-[17.5px]">
              <span className="font-bold text-[#222]">App</span>
              <div className="ml-[16px] w-[1px] h-[20px] bg-[#aaa]" />
              <span className="ml-[15px] text-[#666]">Callbacks</span>
            </div>
            <div className="flex-1 min-h-0 flex">
              <div className="w-[426px] shrink-0 flex flex-col">
                <div className="h-[45px] shrink-0 flex items-start">
                  <div className="ml-[11px] mt-[6px] w-[314px] h-[33px] bg-white border border-[#7f7f7f] flex items-center justify-between px-[7px] text-[17.5px] text-[#777]">
                    Search
                    <svg viewBox="0 0 18 18" className="w-[16px] h-[16px]">
                      <circle cx="7" cy="7" r="5" fill="none" stroke="#666" strokeWidth="1.500" />
                      <path d="M11 11l6 6" stroke="#666" strokeWidth="2" />
                    </svg>
                  </div>
                  <div className="ml-[12px] mt-[6px] w-[33px] h-[33px] rounded-[6px] bg-[#d6d6d6] border border-[#a0a0a0] flex items-center justify-center">
                    <svg viewBox="0 0 20 20" className="w-[20px] h-[20px]">
                      <path d="M0 4h4M2 2v4M0 12h4M2 10v4M7 2h11M7 6h11M7 10h11M7 14h11M7 18h11" stroke="#444" strokeWidth="1.200" />
                    </svg>
                  </div>
                  <div className="ml-[9px] mt-[6px] w-[33px] h-[33px] rounded-[6px] border border-[#a0a0a0] flex items-center justify-center">
                    <svg viewBox="0 0 20 22" className="w-[20px] h-[22px]">
                      <text x="0" y="9" fontSize="10" fill="#444">A</text>
                      <text x="0" y="21" fontSize="10" fill="#444">Z</text>
                      <path d="M14 2v14M11 12l3 5 3-5" fill="none" stroke="#444" strokeWidth="1.300" />
                    </svg>
                  </div>
                </div>
                <div className="h-[39px] shrink-0 flex items-center pl-[15px] bg-[#e6e6e6] border-y border-[#cfcfcf] text-[15.500px] text-[#333]">
                  <Tri className="w-[11px] h-[7px] mr-[6px] text-[#222]" />
                  SHARING DETAILS
                </div>
                <div className="flex-1 min-h-0 overflow-hidden relative pt-[7px]">
                  {detailRows.map((d) => (
                    <div key={d} className="h-[37.750px] flex items-start text-[16.500px] text-[#333]">
                      <span className="w-[218px] pl-[14px] leading-[33px]">{d}</span>
                      <div className="w-[177px] h-[33px] bg-white border border-[#8c8c8c] px-[6px] flex items-center">
                        <div className="w-full overflow-hidden whitespace-nowrap">{detailValues[d]}</div>
                      </div>
                    </div>
                  ))}
                  <div className="absolute left-[400px] top-[7px] w-[18px] h-[175px] rounded-t-[5px] border border-[#a8a8a8] flex flex-col items-center justify-center gap-[6px]">
                    <div className="w-[3px] h-[3px] bg-[#333]" />
                    <div className="w-[3px] h-[3px] bg-[#333]" />
                    <div className="w-[3px] h-[3px] bg-[#333]" />
                  </div>
                </div>
              </div>
              <ScrollTrack trackClass="w-[23px]" thumbClass="h-[127px] mt-[8px]" />
            </div>
            <div className="h-[34px] shrink-0 flex items-center justify-end pr-[8px] bg-[#e6e6e6] border-t border-[#c4c4c4]">
              <Tri dir="right" className="w-[11px] h-[15px] text-[#8a8a8a]" />
              <div className="w-[2px] h-[15px] bg-[#8a8a8a]" />
            </div>
          </div>
        </div>
      </div>
    </div>
  );
}
